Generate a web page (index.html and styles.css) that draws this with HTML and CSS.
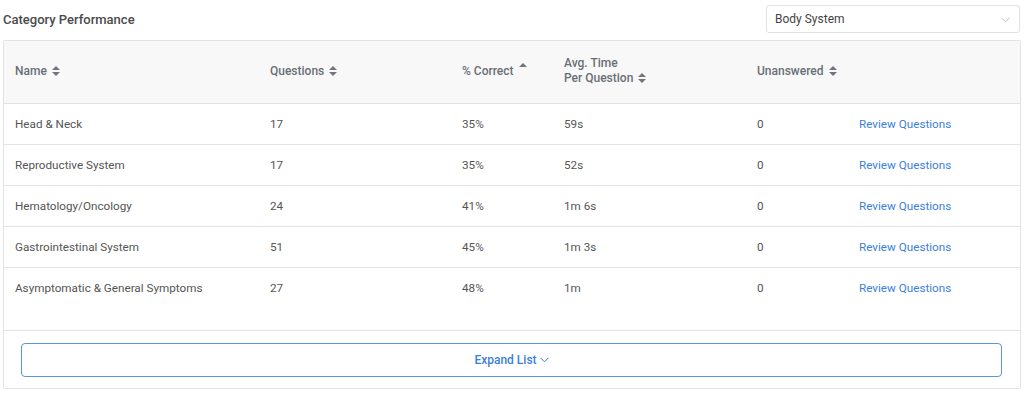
FILE: index.html
```html
<!DOCTYPE html>
<html>
<head>
<meta charset="utf-8">
<link rel="stylesheet" href="styles.css">
</head>
<body>
<div class="page">
  <div class="topbar">
    <h2 class="title">Category Performance</h2>
    <div class="select">
      <span>Body System</span>
      <svg class="chev" width="9" height="6" viewBox="0 0 9 6"><path d="M0.5 0.8 L4.5 4.8 L8.5 0.8" fill="none" stroke="#bbb" stroke-width="1"/></svg>
    </div>
  </div>
  <div class="card">
    <table class="tbl">
      <colgroup>
        <col class="c1"><col class="c2"><col class="c3"><col class="c4"><col class="c5"><col>
      </colgroup>
      <thead>
        <tr>
          <th>Name <svg class="sort" width="8" height="10" viewBox="0 0 8 10"><path d="M4 0 L8 4 L0 4Z M0 6 L8 6 L4 10Z" fill="#70757c"/></svg></th>
          <th>Questions <svg class="sort" width="8" height="10" viewBox="0 0 8 10"><path d="M4 0 L8 4 L0 4Z M0 6 L8 6 L4 10Z" fill="#70757c"/></svg></th>
          <th>% Correct <svg class="sort up" width="8" height="10" viewBox="0 0 8 10"><path d="M4 0 L8 4 L0 4Z" fill="#70757c"/></svg></th>
          <th><span class="two">Avg. Time<br>Per Question <svg class="sort" width="8" height="10" viewBox="0 0 8 10"><path d="M4 0 L8 4 L0 4Z M0 6 L8 6 L4 10Z" fill="#70757c"/></svg></span></th>
          <th>Unanswered <svg class="sort" width="8" height="10" viewBox="0 0 8 10"><path d="M4 0 L8 4 L0 4Z M0 6 L8 6 L4 10Z" fill="#70757c"/></svg></th>
          <th></th>
        </tr>
      </thead>
      <tbody>
        <tr><td>Head &amp; Neck</td><td>17</td><td>35%</td><td>59s</td><td>0</td><td><a class="link">Review Questions</a></td></tr>
        <tr><td>Reproductive System</td><td>17</td><td>35%</td><td>52s</td><td>0</td><td><a class="link">Review Questions</a></td></tr>
        <tr><td>Hematology/Oncology</td><td>24</td><td>41%</td><td>1m 6s</td><td>0</td><td><a class="link">Review Questions</a></td></tr>
        <tr><td>Gastrointestinal System</td><td>51</td><td>45%</td><td>1m 3s</td><td>0</td><td><a class="link">Review Questions</a></td></tr>
        <tr><td>Asymptomatic &amp; General Symptoms</td><td>27</td><td>48%</td><td>1m</td><td>0</td><td><a class="link">Review Questions</a></td></tr>
      </tbody>
    </table>
    <div class="spacer"></div>
    <div class="footer">
      <button class="expand">Expand List <svg width="9" height="6" viewBox="0 0 9 6"><path d="M0.5 0.8 L4.5 4.8 L8.5 0.8" fill="none" stroke="#3b7fdb" stroke-width="1"/></svg></button>
    </div>
  </div>
</div>
</body>
</html>
```

FILE: styles.css
```css
* { box-sizing: border-box; }
html, body { margin: 0; padding: 0; background: #fff; }
body { font-family: Roboto, "Liberation Sans", Arial, sans-serif; color: #555; }
.page { padding: 5px 3px 0 3px; }
.topbar { display: flex; align-items: center; justify-content: space-between; height: 28px; margin-bottom: 7px; }
.title { margin: 0; font-size: 13px; font-weight: 500; color: #4a4a4a; }
.select { width: 254px; height: 28px; margin-right: 1px; border: 1px solid #e1e1e1; border-radius: 3px; display: flex; align-items: center; justify-content: space-between; padding: 0 9px 0 8px; font-size: 12px; color: #444; }
.chev { margin-top: 1px; }
.card { border: 1px solid #e3e3e3; border-radius: 2px; }
.tbl { width: 100%; border-collapse: collapse; table-layout: fixed; font-size: 11.7px; }
.c1 { width: 266px; }
.c2 { width: 192px; }
.c3 { width: 102px; }
.c4 { width: 193px; }
.c5 { width: 102px; }
.tbl thead tr { background: #f8f8f8; height: 62px; }
.tbl th { text-align: left; font-size: 12px; font-weight: 500; color: #6a6f76; padding: 0 0 2px 0; vertical-align: middle; border-bottom: 1px solid #e3e3e3; }
.tbl th:first-child, .tbl td:first-child { padding-left: 11px; }
.two { display: inline-block; line-height: 15px; }
.sort { vertical-align: -1px; margin-left: 2px; }
.sort.up { vertical-align: 2px; }
.tbl td { height: 41px; padding: 0; color: #555; border-bottom: 1px solid #e3e3e3; vertical-align: middle; }
.tbl tbody tr:last-child td { border-bottom: none; }
.link { color: #3b7fdb; cursor: pointer; }
.spacer { height: 23px; border-bottom: 1px solid #e3e3e3; }
.footer { padding: 12px 18px 11px 17px; }
.expand { display: flex; width: 100%; height: 34px; align-items: center; justify-content: center; gap: 3px; background: #fff; border: 1px solid #5b95dc; border-radius: 4px; font-family: Roboto, "Liberation Sans", Arial, sans-serif; font-size: 12px; font-weight: 500; color: #3b7fdb; }
```
